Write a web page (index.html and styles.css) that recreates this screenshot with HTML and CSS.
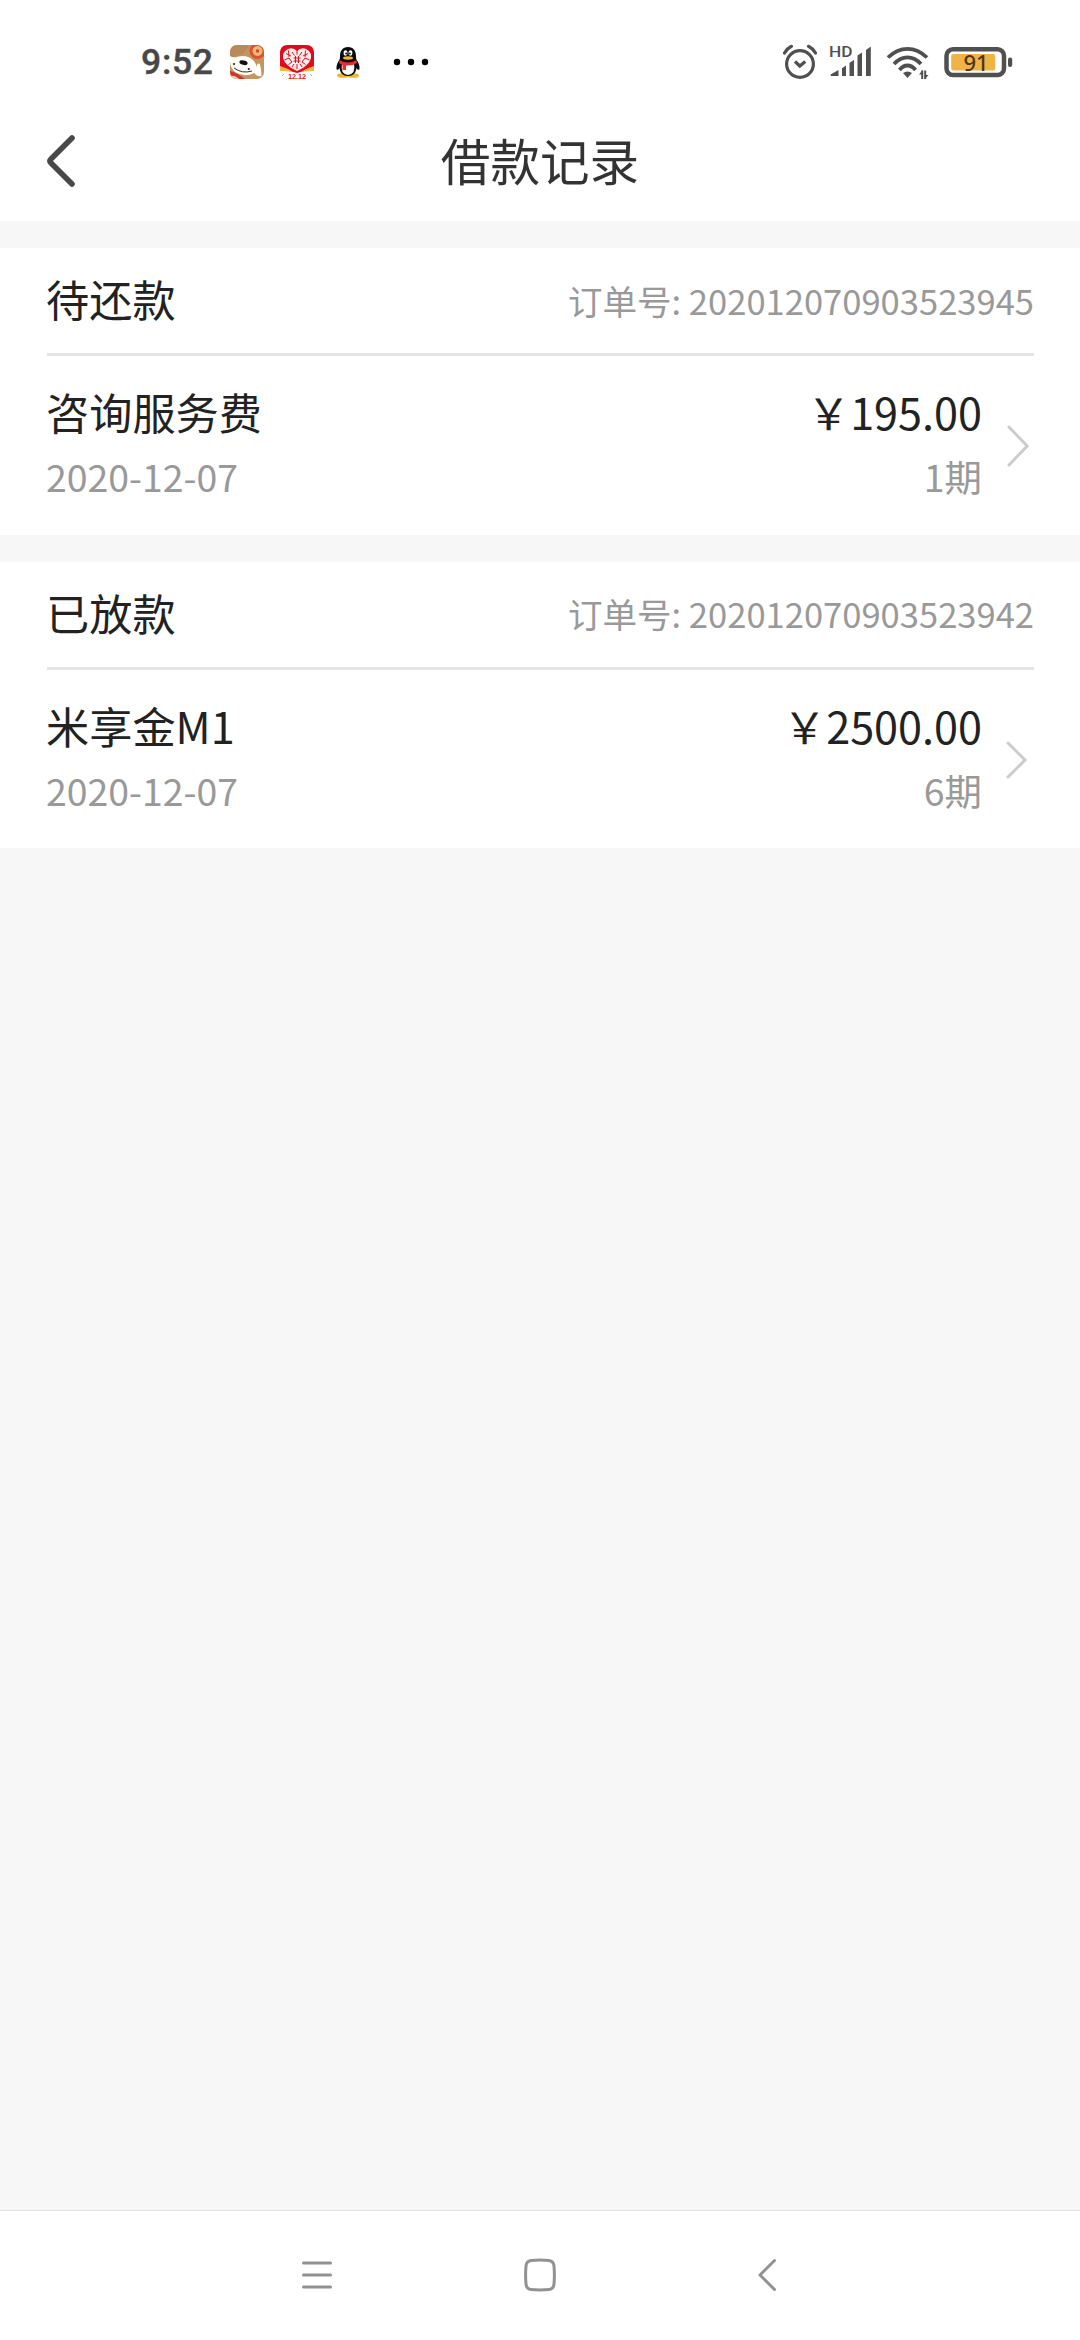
FILE: index.html
```html
<!DOCTYPE html>
<html lang="zh-CN">
<head>
<meta charset="utf-8">
<title>借款记录</title>
<link rel="stylesheet" href="styles.css">
</head>
<body>
<div class="screen">
  <header class="top">
    <div class="status-bar">
      <span class="clock">9:52</span>
      <svg class="app-icon jd" viewBox="0 0 34 34">
        <defs><clipPath id="jd-clip"><rect width="34" height="34" rx="7"/></clipPath></defs>
        <g clip-path="url(#jd-clip)">
          <rect width="34" height="34" fill="#c39560"/>
          <path d="M0 0H20L13 9L0 13Z" fill="#b98a58"/>
          <circle cx="27.500" cy="6" r="8" fill="#dc5333"/>
          <circle cx="27.500" cy="6" r="5" fill="#efbb72"/>
          <rect x="26" y="4.500" width="3" height="3" fill="#d14b2b"/>
          <path d="M0 26Q8 28 15 34H0Z" fill="#cf3a28"/>
          <path d="M0 31Q5 30 9 34H0Z" fill="#f3d9b8"/>
          <path d="M0 11Q3 13 7 12Q16 9 23 15Q26 18 26.500 22Q27 17 30 19Q31.500 25 31.500 31Q27 32 24.500 28Q14 33 5 27Q-1 22 0 11Z" fill="#fffdf8"/>
          <ellipse cx="13.500" cy="17.700" rx="4.200" ry="2.200" transform="rotate(14 13.500 17.700)" fill="#15100d"/>
          <circle cx="4" cy="19" r="1.100" fill="#2a1d18"/><circle cx="18.800" cy="24" r="1.100" fill="#2a1d18"/>
          <path d="M4 23Q12 29 22 26" fill="none" stroke="#3a2a22" stroke-width="1"/>
        </g>
      </svg>
      <svg class="app-icon heart" viewBox="0 0 34 34">
        <defs><clipPath id="heart-clip"><rect width="34" height="34" rx="7"/></clipPath></defs>
        <g clip-path="url(#heart-clip)">
          <rect width="34" height="34" fill="#fff"/>
          <path d="M0 0H34V24Q27 25 17 28Q7 25 0 24Z" fill="#e3091c"/>
          <path d="M0 21Q7 23 13 27Q7 26 0 26ZM34 21Q27 23 21 27Q27 26 34 26Z" fill="#f0b64a"/>
          <path d="M17 6Q13 2 8 4Q2 7 3 13Q5 21 17 26Q29 21 31 13Q32 7 26 4Q21 2 17 6Z" fill="#fdeeec"/>
          <g fill="none" stroke="#e3091c" stroke-width="1">
            <path d="M17 5V9.500M17 19V24M4.500 15L9 13L12 17L8.500 19.500M29.500 15L25 13L22 17L25.500 19.500M12 22L14 19M22 22L20 19M12 7L14.500 10.500M22 7L19.500 10.500M6 8.500L11 11M28 8.500L23 11M8.500 5.500L9 12M25.500 5.500L25 12M13.500 13H20.500M13.500 16H20.500M15.500 11V18M18.500 11V18"/>
          </g>
          <text class="heart-label" x="17" y="33.500" text-anchor="middle" textLength="18" lengthAdjust="spacingAndGlyphs">12.12</text>
          <path d="M2 31L4 29M30 29L32 31" stroke="#7cb8dc" stroke-width="1"/>
        </g>
      </svg>
      <svg class="app-icon qq" viewBox="0 0 34 34">
        <ellipse cx="12" cy="30.500" rx="6" ry="2.300" fill="#f1b52a"/>
        <ellipse cx="22" cy="30.500" rx="6" ry="2.300" fill="#f1b52a"/>
        <path d="M17 2C11.500 2 9 6 9 11L8.800 14C7 17 5 20 5.500 24C6.200 26 8 24 8.600 23C9 28 12 31 17 31C22 31 25 28 25.400 23C26 24 27.800 26 28.500 24C29 20 27 17 25.200 14L25 11C25 6 22.500 2 17 2Z" fill="#0b0b0d"/>
        <path d="M11 19Q17 21 23 19Q25 29 17 30Q9 29 11 19Z" fill="#fff"/>
        <path d="M8.600 15Q17 20 25.400 15L26 18Q21 21 15 20.500V25H11.500V20Q9 19 8 18Z" fill="#e92b30"/>
        <ellipse cx="14.500" cy="8" rx="1.900" ry="2.800" fill="#fff"/><ellipse cx="19.500" cy="8" rx="1.900" ry="2.800" fill="#fff"/>
        <circle cx="15.100" cy="8.500" r=".9"/><circle cx="18.900" cy="8.500" r=".9"/>
        <ellipse cx="17" cy="13" rx="5" ry="1.700" fill="#f5b52c"/>
      </svg>
      <svg class="more" viewBox="0 0 36 8"><circle cx="4" cy="4" r="3.200"/><circle cx="18" cy="4" r="3.200"/><circle cx="32" cy="4" r="3.200"/></svg>
      <svg class="alarm" viewBox="0 0 36 36" fill="none" stroke="#505050" stroke-width="3.200" stroke-linecap="round">
        <circle cx="18" cy="20" r="13.400"/>
        <path d="M2.500 9Q5 4.500 9.500 2.300M33.500 9Q31 4.500 26.500 2.300"/>
        <path d="M13 17.500L17.800 22L23.300 17.500" stroke-linecap="butt"/>
      </svg>
      <svg class="signal" viewBox="0 0 42 34" fill="#505050">
        <text class="hd" x="-1" y="12" textLength="23.500" lengthAdjust="spacingAndGlyphs">HD</text>
        <path d="M.5 29.500L8.500 25V31H1.500Q.5 31 .5 29.500ZM12 23.200L16 20.500V31H12ZM19.500 17.800L24 15V31H19.500ZM27.500 10.400L32 7.500V31H27.500ZM36 5L40.800 1.600V31H36Z"/>
      </svg>
      <svg class="wifi" viewBox="0 0 44 34" fill="none" stroke="#505050" stroke-width="3.800">
        <path d="M2 12.500Q11 3.800 21.500 3.800Q32 3.800 41 12.500M8 19Q14 12.300 21.500 12.300Q29 12.300 35 19M13.500 25Q17 20.500 21.500 20.500Q26 20.500 29.500 25"/>
        <path d="M17 28Q21.500 24.800 26 28L21.500 33Z" fill="#505050" stroke="none"/>
        <path d="M36.200 25.500V34M39.200 25.500V34" stroke-width="2"/>
        <path d="M36.600 25L33 29.500H36.600ZM38.800 34.500L42.500 30H38.800Z" fill="#505050" stroke="none"/>
      </svg>
      <svg class="battery" viewBox="0 0 70 32">
        <rect x="2.500" y="3.300" width="57.500" height="25.800" rx="6.500" fill="#fff" stroke="#505050" stroke-width="4.500"/>
        <rect x="7.200" y="8" width="44" height="16.400" rx="2" fill="#f1b346"/>
        <rect x="64" y="11.500" width="4.200" height="9.500" rx="2" fill="#505050"/>
        <text class="battery-level" x="32" y="24.600" text-anchor="middle">91</text>
      </svg>
    </div>
    <div class="title-bar">
      <svg class="back" viewBox="0 0 32 56"><path d="M28 5L7 26Q5 28 7 30L28 51" fill="none" stroke="#484848" stroke-width="5.600" stroke-linecap="round"/></svg>
      <h1 class="title">借款记录</h1>
    </div>
  </header>

  <main class="list">
    <section class="card">
      <div class="card-head"><span class="state">待还款</span><span class="order">订单号: 202012070903523945</span></div>
      <div class="card-body">
        <div class="info"><span class="name">咨询服务费</span><span class="sub">2020-12-07</span></div>
        <div class="info end"><span class="name">￥195.00</span><span class="sub">1期</span></div>
        <svg class="chevron" viewBox="0 0 24 44"><path d="M3 3L21.200 22L3 41"/></svg>
      </div>
    </section>
    <section class="card">
      <div class="card-head"><span class="state">已放款</span><span class="order">订单号: 202012070903523942</span></div>
      <div class="card-body">
        <div class="info"><span class="name">米享金M1</span><span class="sub">2020-12-07</span></div>
        <div class="info end"><span class="name">￥2500.00</span><span class="sub">6期</span></div>
        <svg class="chevron" viewBox="0 0 24 44"><path d="M2 5L19 22L2 39"/></svg>
      </div>
    </section>
  </main>

  <nav class="nav-bar">
    <svg class="nav-icon" viewBox="0 0 36 36"><path d="M4.500 6H31.500M4.500 18H31.500M4.500 30H31.500"/></svg>
    <svg class="nav-icon" viewBox="0 0 36 36"><path d="M9 3.500Q18 2.700 27 3.500Q31.500 4 32 9Q32.800 18 32 27Q31.500 32 27 32.500Q18 33.300 9 32.500Q4.500 32 4 27Q3.200 18 4 9Q4.500 4 9 3.500Z"/></svg>
    <svg class="nav-icon" viewBox="0 0 36 36"><path d="M29.500 3.500L15 18L29.500 32.500"/></svg>
  </nav>
</div>
</body>
</html>
```
FILE: styles.css
```css
* { box-sizing: border-box; }

body {
  margin: 0;
  background: #f7f7f7;
  font-family: "Noto Sans CJK SC", sans-serif;
  color: #222;
}

svg { display: block; flex: none; }

.screen {
  width: 1080px;
  height: 2340px;
  display: flex;
  flex-direction: column;
  overflow: hidden;
}

.top { height: 221px; background: #fff; }

.status-bar {
  height: 102px;
  padding: 22px 66px 0 141px;
  display: flex;
  align-items: center;
}

.clock {
  width: 89px;
  font: 500 35.5px/40px Roboto, sans-serif;
  letter-spacing: .7px;
  color: #484848;
  -webkit-text-stroke: .4px #484848;
}

.app-icon { width: 34px; height: 34px; }
.heart { margin-left: 16px; }
.qq { margin-left: 17px; }
.heart-label { font: 700 8px "Liberation Sans", sans-serif; fill: #d81b22; }
.more { width: 36px; height: 8px; margin-left: 28px; }

.alarm { width: 36px; height: 36px; margin-left: auto; }
.signal { width: 42px; height: 34px; margin-left: 12px; overflow: visible; }
.hd { font: 500 15.5px Roboto, sans-serif; }
.wifi { width: 44px; height: 34px; margin-left: 14px; overflow: visible; }
.battery { width: 70px; height: 32px; margin-left: 14px; }
.battery-level { font: 500 22px "Noto Sans", sans-serif; fill: #4a3614; }

.title-bar {
  height: 119px;
  padding: 0 44px 1px;
  display: grid;
  grid-template-columns: 32px 1fr 32px;
  align-items: center;
}

.back { width: 32px; height: 56px; }

.title {
  margin: 0;
  padding-bottom: 5px;
  font-size: 49.6px;
  font-weight: 400;
  line-height: 72px;
  text-align: center;
  color: #333;
}

.list {
  flex: 1;
  padding-top: 27px;
  display: flex;
  flex-direction: column;
  gap: 27px;
}

.card {
  height: 286.5px;
  padding: 0 46px 0 47px;
  background: #fff;
}

.card-head {
  height: 108px;
  padding-bottom: 2px;
  border-bottom: 3px solid #e4e4e4;
  display: flex;
  justify-content: space-between;
  align-items: center;
}

.state {
  margin-left: -1px;
  padding-bottom: 3px;
  font-size: 43.2px;
  line-height: 60px;
}
.order { font-size: 34.56px; line-height: 50px; color: #999; }

.card-body { display: flex; align-items: flex-start; padding-top: 24px; }
.info { margin-left: -1px; display: flex; flex-direction: column; }
.end { margin-left: auto; align-items: flex-end; }
.name { font-size: 43.2px; line-height: 62px; }
.sub { font-size: 37.44px; line-height: 69px; color: #999; }

.chevron {
  width: 24px;
  height: 44px;
  margin: 44px 4px 0 24px;
  fill: none;
  stroke: #ccc;
  stroke-width: 3px;
  stroke-linecap: round;
}

.nav-bar {
  height: 130px;
  padding: 0 299px 2px;
  border-top: 1px solid #e2e2e2;
  background: #fff;
  display: flex;
  justify-content: space-between;
  align-items: center;
}

.nav-icon {
  width: 36px;
  height: 36px;
  fill: none;
  stroke: #929292;
  stroke-width: 3px;
  stroke-linecap: round;
  stroke-linejoin: round;
}
```
